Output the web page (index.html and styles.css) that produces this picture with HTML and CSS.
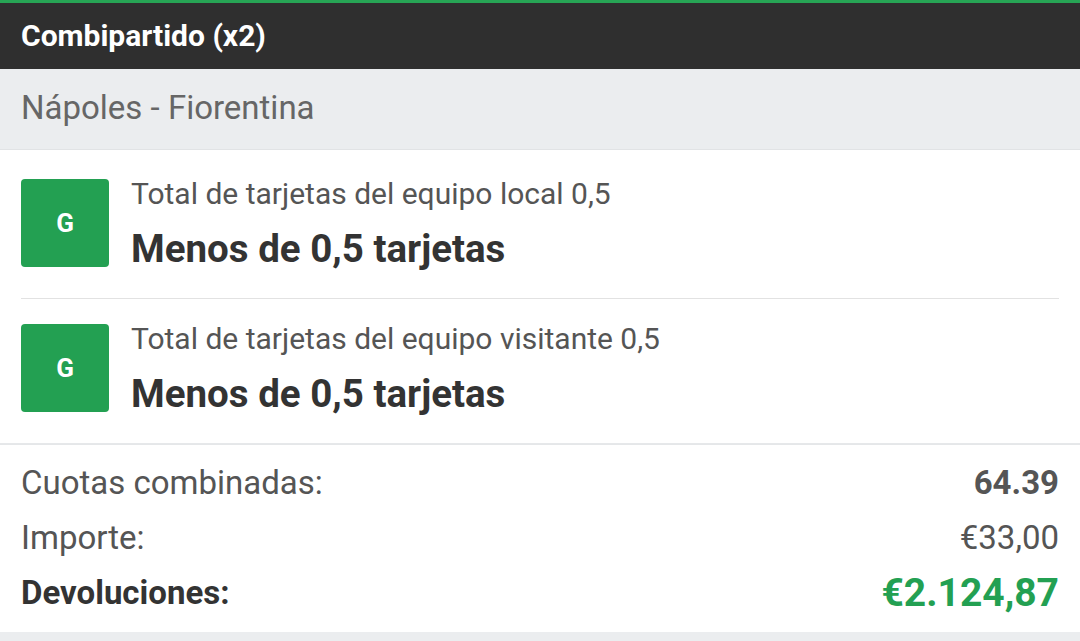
FILE: index.html
```html
<!DOCTYPE html>
<html lang="es">
<head>
    <meta charset="UTF-8">
    <meta name="viewport" content="width=device-width, initial-scale=1.0">
    <title>Combipartido</title>
    <link rel="stylesheet" href="styles.css">
</head>
<body>
    <div class="slip">
        <div class="slip-header">Combipartido (x2)</div>
        <div class="match">Nápoles - Fiorentina</div>

        <div class="selections">
            <div class="selection">
                <div class="badge">G</div>
                <div class="selection-text">
                    <div class="market">Total de tarjetas del equipo local 0,5</div>
                    <div class="pick">Menos de 0,5 tarjetas</div>
                </div>
            </div>
            <div class="selection">
                <div class="badge">G</div>
                <div class="selection-text">
                    <div class="market">Total de tarjetas del equipo visitante 0,5</div>
                    <div class="pick">Menos de 0,5 tarjetas</div>
                </div>
            </div>
        </div>

        <div class="summary">
            <div class="summary-row">
                <span>Cuotas combinadas:</span>
                <span class="odds">64.39</span>
            </div>
            <div class="summary-row">
                <span>Importe:</span>
                <span>€33,00</span>
            </div>
            <div class="summary-row total">
                <span>Devoluciones:</span>
                <span class="returns">€2.124,87</span>
            </div>
        </div>
    </div>
</body>
</html>
```

FILE: styles.css
```css
body {
    font-family: Roboto, "Noto Sans", Arial, sans-serif;
    background-color: #ebedef;
    margin: 0;
}

.slip {
    width: 100%;
}

.slip-header {
    background-color: #2f2f2f;
    border-top: 3px solid #27a555;
    color: white;
    font-size: 30px;
    font-weight: bold;
    height: 69px;
    line-height: 66px;
    padding: 0 21px;
    box-sizing: border-box;
}

.match {
    background-color: #ebedef;
    color: #666;
    font-size: 33px;
    height: 81px;
    line-height: 78px;
    padding: 0 21px;
    border-bottom: 1px solid #e1e3e5;
    box-sizing: border-box;
}

.selections {
    background: white;
    padding: 4px 21px 0;
    border-bottom: 2px solid #e6e8ea;
}

.selection {
    display: flex;
    padding: 25px 0 29px;
}

.selection + .selection {
    border-top: 1px solid #e2e2e2;
}

.badge {
    width: 88px;
    height: 88px;
    flex-shrink: 0;
    background-color: #23a052;
    border-radius: 4px;
    color: white;
    font-size: 26px;
    font-weight: bold;
    display: flex;
    align-items: center;
    justify-content: center;
}

.selection-text {
    margin-left: 22px;
}

.market {
    color: #555;
    font-size: 30px;
    line-height: 30px;
}

.pick {
    color: #333;
    font-size: 38.5px;
    font-weight: bold;
    line-height: 40px;
    margin-top: 20px;
}

.summary {
    background: white;
    padding: 10px 21px 12px;
    box-shadow: 0 2px 3px rgba(0, 0, 0, 0.12);
}

.summary-row {
    display: flex;
    justify-content: space-between;
    align-items: center;
    color: #555;
    font-size: 33px;
    height: 55px;
}

.odds {
    font-weight: bold;
}

.total {
    color: #333;
    font-weight: bold;
}

.returns {
    color: #23a052;
    font-size: 39px;
}
```
